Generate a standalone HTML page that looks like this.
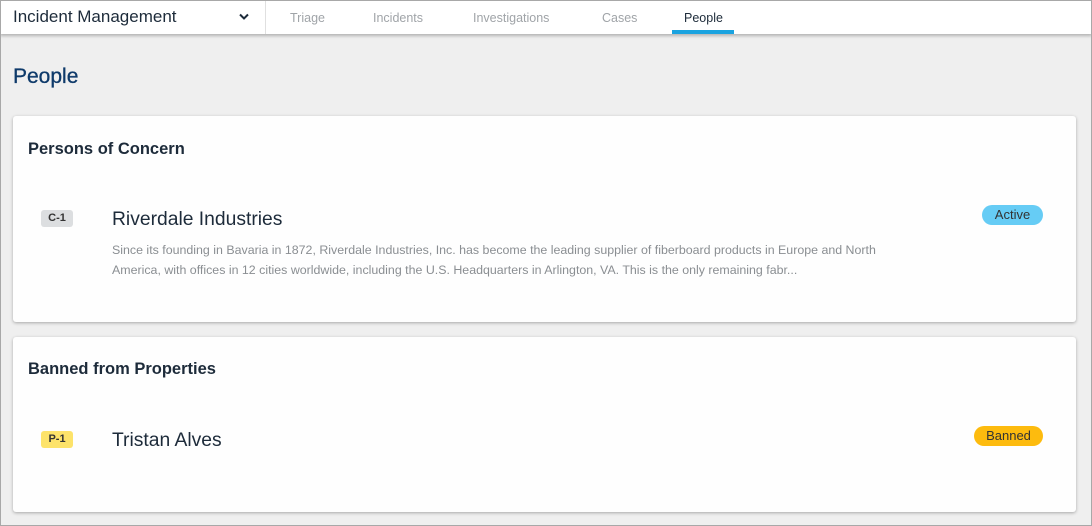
<!DOCTYPE html>
<html><head><style>
*{box-sizing:border-box;margin:0;padding:0}
body{width:1092px;height:526px;background:#efefef;font-family:"Liberation Sans",sans-serif;position:relative;overflow:hidden}
.frame{position:absolute;left:0;top:0;width:1092px;height:526px;border:1px solid #a8a8a8;pointer-events:none;z-index:5}
.hdr{position:absolute;left:0;top:0;width:1092px;height:34px;background:#fff;box-shadow:0 2px 3px rgba(0,0,0,.25)}
.app{position:absolute;left:13px;top:7px;font-size:17px;color:#1d2b3a}
.chev{position:absolute;left:238px;top:13px}
.sep{position:absolute;left:265px;top:0;width:1px;height:34px;background:#e0e0e0}
.tab{position:absolute;top:11px;font-size:12.5px;color:#a0a4a8}
.tab.on{color:#1d2b3a}
.ul{position:absolute;left:672px;top:30px;width:62px;height:4px;background:#1aa3e0}
h1{position:absolute;left:13px;top:65px;font-size:21px;font-weight:normal;color:#0e3a6a;-webkit-text-stroke:0.3px #0e3a6a}
.card{position:absolute;left:13px;width:1063px;background:#fefefe;border-radius:3px;box-shadow:0 1px 3px rgba(0,0,0,.3)}
.ct{position:absolute;left:15px;font-size:16.5px;font-weight:bold;color:#1d2b3a}
.id{position:absolute;left:28px;width:32px;height:17px;border-radius:3px;font-size:11px;font-weight:bold;text-align:center;line-height:17px;color:#333}
.nm{position:absolute;left:99px;font-size:19.3px;color:#1d2b3a}
.ds{position:absolute;left:99px;top:124px;width:800px;font-size:12.4px;line-height:20px;color:#8a8e92}
.pill{position:absolute;height:20px;border-radius:10px;font-size:13px;line-height:20px;text-align:center;color:#333}
</style></head><body>
<div class="frame"></div>
<div class="hdr">
<div class="app">Incident Management</div>
<svg class="chev" width="12" height="8" viewBox="0 0 12 8"><path d="M2 1.5l4 4 4-4" fill="none" stroke="#1d2b3a" stroke-width="2"/></svg>
<div class="sep"></div>
<div class="tab" style="left:290px">Triage</div>
<div class="tab" style="left:373px">Incidents</div>
<div class="tab" style="left:473px">Investigations</div>
<div class="tab" style="left:602px">Cases</div>
<div class="tab on" style="left:684px">People</div>
<div class="ul"></div>
</div>
<h1>People</h1>
<div class="card" style="top:116px;height:206px">
<div class="ct" style="top:24px">Persons of Concern</div>
<div class="id" style="top:94px;background:#dcdee0">C-1</div>
<div class="nm" style="top:93px">Riverdale Industries</div>
<div class="ds">Since its founding in Bavaria in 1872, Riverdale Industries, Inc. has become the leading supplier of fiberboard products in Europe and North America, with offices in 12 cities worldwide, including the U.S. Headquarters in Arlington, VA. This is the only remaining fabr...</div>
<div class="pill" style="left:969px;top:89px;width:61px;background:#66ccf5">Active</div>
</div>
<div class="card" style="top:337px;height:175px">
<div class="ct" style="top:23px">Banned from Properties</div>
<div class="id" style="top:94px;background:#fde36a">P-1</div>
<div class="nm" style="top:93px">Tristan Alves</div>
<div class="pill" style="left:961px;top:89px;width:69px;background:#fdbb0e">Banned</div>
</div>
</body></html>
